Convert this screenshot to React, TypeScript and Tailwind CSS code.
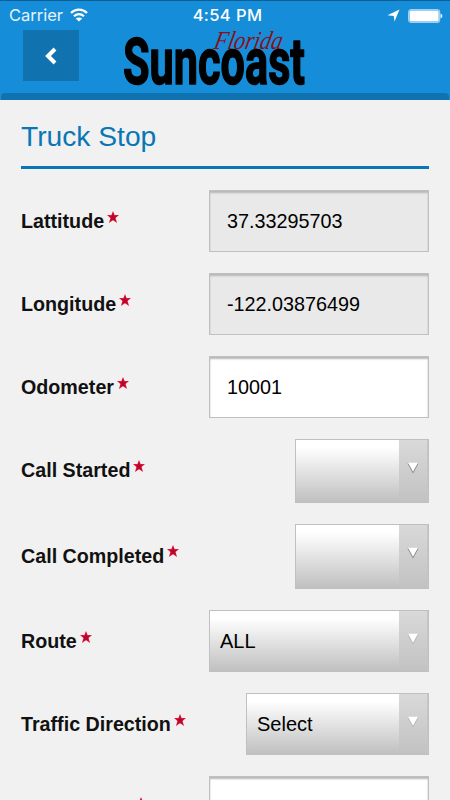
const fields = [
  { id: 'latitude', label: 'Lattitude', kind: 'readonly', value: '37.33295703', size: 'h-[62px] w-[220px]' },
  { id: 'longitude', label: 'Longitude', kind: 'readonly', value: '-122.03876499', size: 'h-[62px] w-[220px]' },
  { id: 'odometer', label: 'Odometer', kind: 'text', value: '10001', size: 'h-[62px] w-[220px]' },
  { id: 'started', label: 'Call Started', kind: 'select', value: '', size: 'h-[64px] w-[134px]' },
  { id: 'completed', label: 'Call Completed', kind: 'select', value: '', size: 'h-[65px] w-[134px]' },
  { id: 'route', label: 'Route', kind: 'select', value: 'ALL', size: 'h-[62px] w-[220px]' },
  { id: 'direction', label: 'Traffic Direction', kind: 'select', value: 'Select', size: 'h-[62px] w-[183px]' },
  { id: 'extra', label: '', kind: 'text', value: '', size: 'h-[62px] w-[220px]' },
];

const RequiredStar = () => (
  <svg className="ml-[3px] -mt-[10px] h-[12px] w-[12px]" viewBox="0 0 22 22">
    <path d="M11 0l2.900 7.500H22l-6.200 5.500 2.600 9L11 17 3.600 22l2.600-9L0 7.500h8.100z" fill="#e5143c" />
    <path d="M11 3l2 6.500h5l-4 3.500 2 6L11 15.500 6 19l2-6-4-3.500h5z" fill="#b00a28" />
  </svg>
);

const StatusBar = () => (
  <div className="grid h-[30px] grid-cols-3 items-center border-t border-[#0c5c94] pl-[9px] pr-[7px] font-['Inter','Liberation_Sans',sans-serif] text-[16.5px] text-white">
    <div className="flex items-center">
      <span className="text-[#e6f3fb]">Carrier</span>
      <svg className="ml-[7px] -mt-px h-[14px] w-[18px]" viewBox="0 0 36 28" fill="none" stroke="white" strokeWidth="4.500">
        <path d="M2 10C11 1 25 1 34 10" />
        <path d="M8 16.500C14 11 22 11 28 16.500" />
        <path d="M18 27l-6.500-6c3.500-3 9.500-3 13 0z" fill="white" stroke="none" />
      </svg>
    </div>
    <span className="pl-[3px] text-center font-medium tracking-[0.4px] whitespace-nowrap">4:54 PM</span>
    <div className="flex items-center justify-end">
      <svg className="mr-[8px] h-[13px] w-[13px]" viewBox="0 0 13 13">
        <path d="M12.500.500L7.500 12.500 6.800 6.900.500 6.300z" fill="white" />
      </svg>
      <svg className="h-[14px] w-[35px]" viewBox="0 0 35 14">
        <rect x=".6" y=".6" width="31" height="12.800" rx="2.500" fill="none" stroke="#9bd0f2" strokeWidth="1.200" />
        <rect x="1.500" y="1.500" width="29.200" height="11" rx="1.500" fill="white" />
        <path d="M32.500 4.500c2.500 1 2.500 4 0 5z" fill="#e6f3fb" />
      </svg>
    </div>
  </div>
);

const Logo = () => (
  <svg className="ml-[44px] h-[60px] w-[186px] overflow-visible" viewBox="0 0 186 60">
    <text
      x="0"
      y="54.300"
      textLength="182"
      lengthAdjust="spacingAndGlyphs"
      className="font-['Roboto','Liberation_Sans',sans-serif] text-[65px] font-bold"
      fill="black"
      stroke="black"
      strokeWidth="1.500"
      strokeLinejoin="round"
    >
      Suncoast
    </text>
    <text
      x="90"
      y="18.500"
      textLength="68"
      lengthAdjust="spacingAndGlyphs"
      className="font-['Liberation_Serif',serif] text-[26px] italic"
      fill="#8a1020"
      transform="translate(4 0) skewX(-12)"
    >
      Florida
    </text>
  </svg>
);

const Field = ({ kind, value, size }: { kind: string; value: string; size: string }) => {
  if (kind === 'select') {
    return (
      <button className={`${size} flex border border-[#c0c0c0] bg-linear-to-b from-white from-12% to-[#c0c0c0] text-left text-[20px] text-black`}>
        <span className="flex-1 self-center pl-[10px]">{value}</span>
        <span className="flex h-full w-[29px] justify-center border-r border-[#c6c6c6] bg-linear-to-b from-[#d9d9d9] to-[#c2c2c2]">
          <svg className="mt-[22px] -ml-px h-[12px] w-[12px]" viewBox="0 0 12 12">
            <path d="M.500 1.500L6 11.500l5.500-10z" fill={value ? '#b4b4b4' : '#858585'} />
            <path d="M1 .800h10L6 9.800z" fill="white" />
          </svg>
        </span>
      </button>
    );
  }
  return (
    <input
      readOnly={kind === 'readonly'}
      defaultValue={value}
      className={`${size} rounded-none border border-[#c0c0c0] px-[17px] text-[19.8px] text-black shadow-[inset_0_2px_2px_#b8b8b8] outline-none ${
        kind === 'readonly' ? 'bg-[#e9e9e9]' : 'bg-white'
      }`}
    />
  );
};

const App = () => {
  return (
    <div className="h-[800px] overflow-hidden bg-[#f1f1f1] font-['Liberation_Sans',Arial,sans-serif]">
      <header className="h-[100px] bg-[#168dd9]">
        <StatusBar />
        <div className="flex h-[63px] items-start pl-[23px]">
          <button className="flex h-[51px] w-[56px] items-center justify-center bg-[#1172b0] text-white">
            <svg className="h-[18px] w-[12px]" viewBox="0 0 12 18">
              <path d="M10 2L3 9l7 7" fill="none" stroke="currentColor" strokeWidth="4" />
            </svg>
          </button>
          <Logo />
        </div>
        <div className="mx-px h-[7px] rounded-t-sm bg-[#1172b0]" />
      </header>

      <main className="px-[21px]">
        <h1 className="h-[69px] border-b-3 border-[#0877b5] pt-[15px] text-[28.2px] leading-[42px] text-[#0877b5]">
          Truck Stop
        </h1>
        <form className="flex flex-col gap-[21px] pt-[21px]">
          {fields.map(({ id, label, kind, value, size }) => (
            <div key={id} className="flex items-center justify-between">
              <label
                className={`flex items-center text-[19.7px] font-bold whitespace-nowrap text-[#111] ${
                  kind === 'select' && !value ? 'pt-0' : 'pt-[2px]'
                }`}
              >
                {label || <span className="h-[30px] w-[111px]" />}
                <RequiredStar />
              </label>
              <Field kind={kind} value={value} size={size} />
            </div>
          ))}
        </form>
      </main>
    </div>
  );
};

export default App;
